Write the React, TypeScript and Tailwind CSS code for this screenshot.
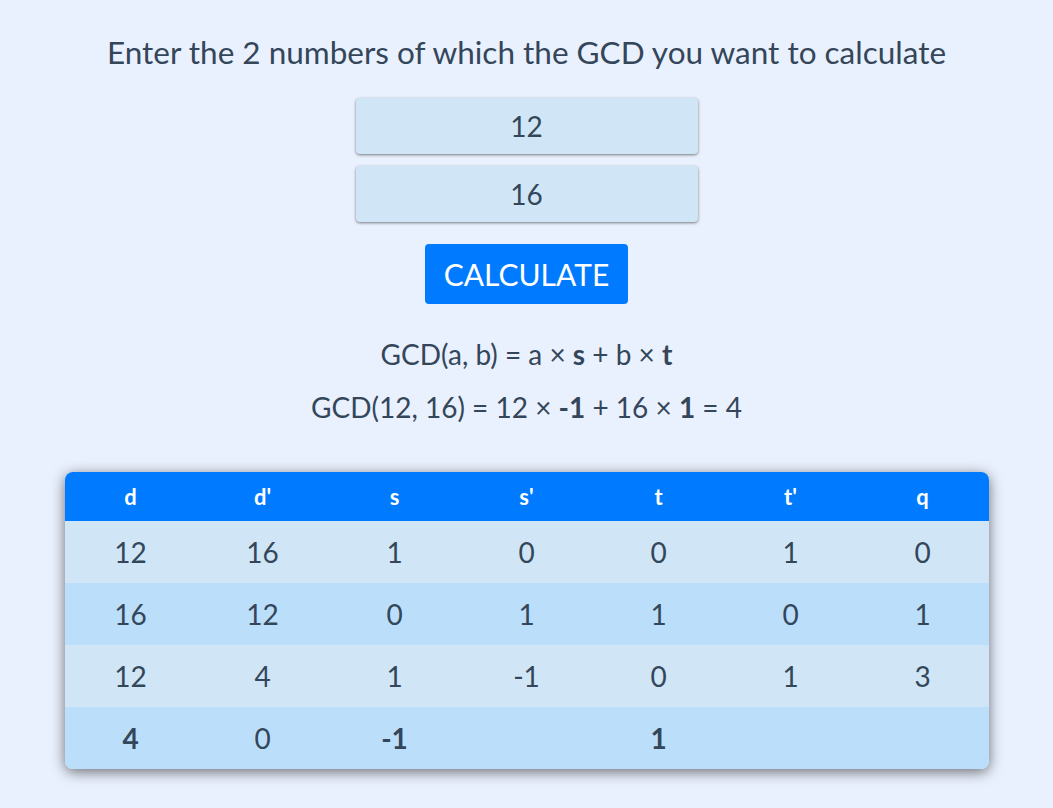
import React from 'react';

const rows: { cells: string[]; bold?: number[] }[] = [
  { cells: ['12', '16', '1', '0', '0', '1', '0'] },
  { cells: ['16', '12', '0', '1', '1', '0', '1'] },
  { cells: ['12', '4', '1', '-1', '0', '1', '3'] },
  { cells: ['4', '0', '-1', '', '1', '', ''], bold: [0, 2, 4] },
];

const headers = ['d', "d'", 's', "s'", 't', "t'", 'q'];

export default function App() {
  return (
    <div className="min-h-screen bg-[#eaf1fe] text-[#34465a] flex flex-col items-center" style={{ fontFamily: 'Lato, "Open Sans", sans-serif' }}>
      <h1 className="mt-[32px] text-[31.5px] leading-[40px]">Enter the 2 numbers of which the GCD you want to calculate</h1>

      <input
        readOnly
        value="12"
        className="mt-[26px] w-[342px] h-[56px] bg-[#d0e6f7] rounded-[4px] text-center text-[28px] text-[#34465a] shadow-[0_1px_3px_rgba(0,0,0,0.5)] outline-none"
      />
      <input
        readOnly
        value="16"
        className="mt-[12px] w-[342px] h-[56px] bg-[#d0e6f7] rounded-[4px] text-center text-[28px] text-[#34465a] shadow-[0_1px_3px_rgba(0,0,0,0.5)] outline-none"
      />
      <button className="mt-[22px] w-[203px] h-[60px] bg-[#007bff] text-white text-[30px] rounded-[4px]">
        CALCULATE
      </button>

      <div className="mt-[34px] text-[28px] leading-[32px]">
        GCD(a, b) = a × <b>s</b> + b × <b>t</b>
      </div>
      <div className="mt-[21px] text-[28px] leading-[32px]">
        GCD(12, 16) = 12 × <b>-1</b> + 16 × <b>1</b> = 4
      </div>

      <div className="mt-[49px] w-[924px] rounded-[8px] overflow-hidden shadow-[0_3px_14px_rgba(0,0,0,0.55)]">
        <div className="grid grid-cols-7 bg-[#007bff] h-[49px] items-center text-white font-bold text-[22px]">
          {headers.map((h) => (
            <div key={h} className="text-center">{h}</div>
          ))}
        </div>
        {rows.map((r, i) => (
          <div key={i} className={`grid grid-cols-7 h-[62px] items-center text-[28px] ${i % 2 === 0 ? 'bg-[#d0e6f7]' : 'bg-[#bbdefb]'}`}>
            {r.cells.map((c, j) => (
              <div key={j} className={`text-center ${r.bold?.includes(j) ? 'font-bold' : ''}`}>{c}</div>
            ))}
          </div>
        ))}
      </div>
    </div>
  );
}
